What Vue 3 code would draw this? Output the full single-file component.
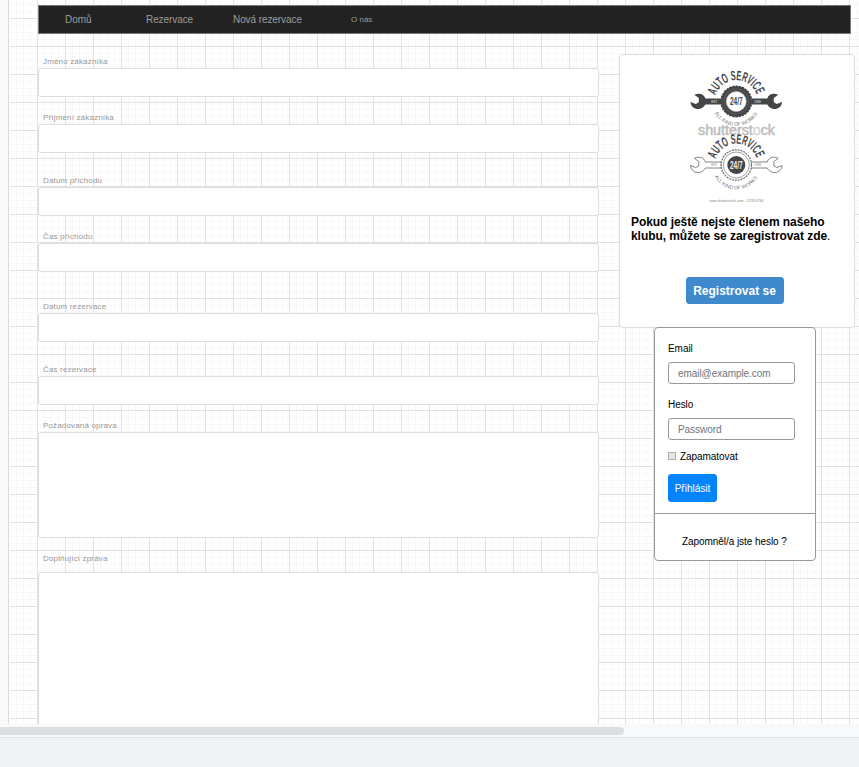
<script setup>
const links = [
  { text: 'Domů', cls: 'home' },
  { text: 'Rezervace', cls: 'list' },
  { text: 'Nová rezervace', cls: 'new' },
  { text: 'O nás', cls: 'about' },
]
const fields = [
  { label: 'Jméno zákazníka', cls: '' },
  { label: 'Příjmení zákazníka', cls: 'near' },
  { label: 'Datum příchodu', cls: 'mid' },
  { label: 'Čas příchodu', cls: 'near' },
  { label: 'Datum rezervace', cls: 'far' },
  { label: 'Čas rezervace', cls: 'mid' },
  { label: 'Požadovaná oprava', cls: 'near tall' },
  { label: 'Doplňující zpráva', cls: 'near last' },
]
const badges = [
  { id: 'dark', y: 46.5, dark: true },
  { id: 'light', y: 110, dark: false },
]
</script>

<template>
  <div class="window">
    <main class="canvas">
      <div class="sheet">
        <nav class="nav">
          <a v-for="l in links" :key="l.text" :class="l.cls"><span>{{ l.text }}</span></a>
        </nav>
        <div class="columns">
          <form class="form">
            <div v-for="f in fields" :key="f.label" class="field" :class="f.cls">
              <label>{{ f.label }}</label>
              <div class="box"></div>
            </div>
          </form>
          <aside class="side">
            <section class="club">
              <svg class="logo" width="130" height="154" viewBox="0 0 130 154">
                <defs>
                  <path id="upper" d="M-20.600 -6 A21.500 21.500 0 0 1 20.600 -6" />
                  <path id="lower" d="M-21.500 11.500 A24.400 24.400 0 0 0 21.500 11.500" />
                </defs>
                <text class="mark" x="28" y="80" textLength="77" lengthAdjust="spacingAndGlyphs">shutterst<tspan>o</tspan>ck</text>
                <g v-for="b in badges" :key="b.id" :transform="`translate(66.300 ${b.y})`">
                  <g v-for="s in [1, -1]" :key="s" :transform="`scale(${s} 1)`">
                    <path
                      :class="b.dark ? 'wrench-dark' : 'wrench-light'"
                      d="M-15 -3 H-31 C-32 -7.500 -37 -9 -42 -6.800 L-37.500 -3.400 L-37.500 .8 L-40.500 2.500 L-45.800 .5 C-45.500 5.500 -41 8.200 -37 7.500 C-34 7 -32 5 -31 3 H-15 Z"
                    />
                  </g>
                  <circle v-if="b.dark" r="15.200" class="teeth" />
                  <circle v-if="b.dark" r="12.500" class="gear" />
                  <circle v-if="!b.dark" r="15.200" class="thin-teeth" />
                  <circle v-if="!b.dark" r="13" class="thin" />
                  <circle :r="b.dark ? 10 : 9" :class="b.dark ? 'hub-light' : 'hub-dark'" />
                  <text class="hours" :class="{ inverse: !b.dark }" x="-6.300" y="3.700" textLength="12.600" lengthAdjust="spacingAndGlyphs">24/7</text>
                  <text class="year" :class="{ inverse: b.dark }" x="-25" y="1">EST</text>
                  <text class="year" :class="{ inverse: b.dark }" x="18" y="1">1969</text>
                  <text class="arc"><textPath href="#upper" textLength="54" lengthAdjust="spacingAndGlyphs">AUTO SERVICE</textPath></text>
                  <text class="under"><textPath href="#lower" textLength="51.500">ALL KIND OF WORKS</textPath></text>
                </g>
                <text class="url" x="39.500" y="147" textLength="54">www.shutterstock.com · 127814760</text>
              </svg>
              <p class="invite"><b>Pokud ještě nejste členem našeho</b><br><b>klubu, můžete se zaregistrovat zde</b>.</p>
              <button class="register">Registrovat se</button>
            </section>
            <section class="login">
              <div class="login-body">
                <label>Email</label>
                <div class="input"><span>email@example.com</span></div>
                <label class="password-label">Heslo</label>
                <div class="input"><span>Password</span></div>
                <div class="remember"><i></i><span>Zapamatovat</span></div>
                <button class="submit">Přihlásit</button>
              </div>
              <div class="forgot">Zapomněl/a jste heslo ?</div>
            </section>
          </aside>
        </div>
      </div>
    </main>
    <div class="scroll"><div class="thumb"></div></div>
    <footer class="status"></footer>
  </div>
</template>

<style>
body { margin: 0; overflow: hidden; }
</style>

<style scoped>
* { box-sizing: border-box; }
.window {
  width: 859px; height: 767px; display: flex; flex-direction: column; overflow: hidden;
  font-family: "Liberation Sans", Arial, sans-serif; font-size: 10px; color: #000; background: #f8f9fb;
}
.canvas { height: 724px; flex: none; padding-left: 8px; overflow: hidden; }
.sheet {
  height: 724px; overflow: hidden; border-left: 1px solid #dcdcdc; padding: 5px 0 0 29px;
  background-color: #fff;
  background-image:
    linear-gradient(to right, #fff 1px, transparent 1px),
    linear-gradient(to right, #e2e2e2 1px, transparent 1px),
    linear-gradient(to bottom, #e2e2e2 1px, transparent 1px),
    linear-gradient(to right, #f8f8f8 1px, transparent 1px),
    linear-gradient(to bottom, #f8f8f8 1px, transparent 1px);
  background-size: 900px 100%, 28px 28px, 28px 28px, 7px 7px, 7px 7px;
  background-position: 0 0, 28px 18px, 28px 18px, 0 4px, 0 4px;
}
.nav {
  width: 813px; height: 29px; display: flex; align-items: center; padding-left: 26px;
  background: #222; border: 1px solid #777; color: #9d9d9d; line-height: 12px;
}
.home { width: 81px; }
.list { width: 87px; letter-spacing: -.08px; }
.new { width: 118px; letter-spacing: -.08px; }
.about { font-size: 8px; }
.columns { display: flex; gap: 20px; padding-top: 20px; }
.form { width: 561px; flex: none; }
.field { display: flex; flex-direction: column; }
.field label { height: 14px; padding: 1px 0 0 5px; font-size: 8px; line-height: 14px; color: #999; letter-spacing: .16px; }
.box { height: 29px; border: 1px solid #ddd; border-radius: 3px; background: #fff; }
.near { margin-top: 13px; }
.mid { margin-top: 20px; }
.far { margin-top: 27px; }
.tall .box { height: 106px; }
.last label { height: 21px; }
.last .box { height: 190px; }
.side { width: 236px; flex: none; display: flex; flex-direction: column; }
.club {
  height: 274px; display: flex; flex-direction: column; align-items: center;
  border: 1px solid #ddd; border-radius: 4px; background: #fff;
}
.logo { display: block; width: 130px; height: 154px; flex: none; align-self: flex-start; margin-left: 50px; }
.invite { align-self: flex-start; margin: 6px 0 0 11px; font-size: 12px; line-height: 14px; letter-spacing: -.06px; white-space: nowrap; }
.register {
  width: 98px; height: 27px; margin: 34px 0 0 -5px; padding: 0; border: 1px solid #3e8acc; border-radius: 3px;
  background: #3e8acc; color: #fff; font: bold 12px/26px "Liberation Sans", Arial, sans-serif; white-space: nowrap;
}
.login {
  width: 162px; height: 234px; margin: -1px 0 0 35px; border: 1px solid #999; border-radius: 4px; background: #fff;
  letter-spacing: -.06px;
}
.login-body { height: 186px; padding: 14px 0 0 13px; border-bottom: 1px solid #999; }
.login-body label { display: block; height: 14px; line-height: 14px; margin-bottom: 6px; }
.login-body .password-label { margin-top: 14px; }
.input {
  width: 127px; height: 22px; padding-left: 9px; border: 1px solid #999; border-radius: 3px;
  color: #6c757d; line-height: 21px; white-space: nowrap;
}
.remember { display: flex; align-items: center; gap: 4px; height: 14px; margin-top: 9px; }
.remember i { width: 8px; height: 8px; border: 1px solid #aaa; border-radius: 1px; background: #e6e6e6; }
.submit {
  display: block; width: 49px; height: 28px; margin-top: 11px; padding: 0; border: 1px solid #0084ff; border-radius: 3px;
  background: #0084ff; color: #fff; font: 10px/27px "Liberation Sans", Arial, sans-serif;
}
.forgot { padding: 21px 0 0 27px; line-height: 14px; white-space: nowrap; }
.scroll { height: 14px; flex: none; padding-top: 3px; border-bottom: 1px solid #e0e2e4; background: #f8f9fb; }
.thumb { width: 624px; height: 8px; border-radius: 0 4px 4px 0; background: #dddee0; }
.status { flex: 1; background: #f1f2f4; }

.mark { font-size: 14.5px; fill: #bcbcbc; stroke: #bcbcbc; stroke-width: .5; }
.mark tspan { fill: #d8d8d8; stroke: #d8d8d8; }
.wrench-dark { fill: #444547; }
.wrench-light { fill: #fff; stroke: #777; stroke-width: .9; }
.teeth { fill: #444547; stroke: #444547; stroke-width: 1.6; stroke-dasharray: 2.2 1; }
.gear { fill: none; stroke: #777; stroke-width: .5; }
.thin-teeth { fill: #fff; stroke: #777; stroke-width: 1.3; stroke-dasharray: 2 .9; }
.thin { fill: none; stroke: #777; stroke-width: .7; }
.hub-light { fill: #fff; stroke: #bbb; stroke-width: .7; }
.hub-dark { fill: #444547; }
.hours { font-size: 10px; font-weight: bold; fill: #444547; }
.year { font-size: 3px; fill: #777; }
.inverse { fill: #eee; }
.arc { font-size: 13.5px; font-weight: bold; fill: #444547; }
.under { font-size: 5px; fill: #777; }
.url { font-size: 3.5px; fill: #888; }
</style>
